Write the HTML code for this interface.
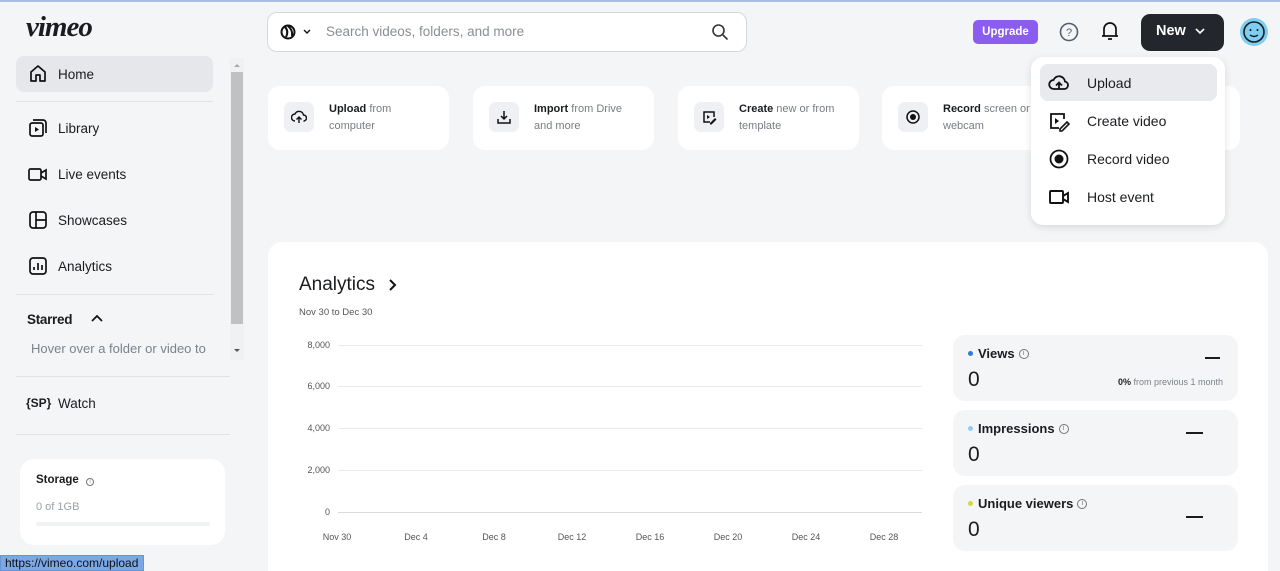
<!DOCTYPE html>
<html style="overflow:hidden;height:571px"><head><meta charset="utf-8"><style>
*{box-sizing:border-box;margin:0;padding:0}
body{width:1280px;height:571px;overflow:hidden;background:#f4f5f7;font-family:"Liberation Sans",sans-serif;color:#1a1c1f;position:relative}
.a{position:absolute}
.nav{position:absolute;left:16px;width:197px;height:36px;display:flex;align-items:center;font-size:13.5px;padding-left:12px}
.nav svg{margin-right:10px}
.hr{position:absolute;left:16px;height:1px;background:#e1e3e7}
.card{position:absolute;top:86px;height:64px;background:#fff;border-radius:12px;font-size:11px;color:#787c85;line-height:17px}
.card .ic{position:absolute;left:16px;top:16px;width:30px;height:30px;background:#eef0f3;border-radius:7px;display:flex;align-items:center;justify-content:center}
.card .t{position:absolute;left:61px;top:15px;width:104px}
.card b{color:#1a1c1f}
.stat{position:absolute;left:953px;width:285px;height:66px;background:#f4f5f7;border-radius:12px}
.stat .l{position:absolute;left:15px;top:11px;font-size:13px;font-weight:bold;display:flex;align-items:center}
.dot{width:5px;height:5px;border-radius:50%;margin-right:5px;display:inline-block}
.stat .v{position:absolute;left:15px;top:33px;font-size:21px}
.dash{position:absolute;width:17px;height:2px;background:#1a1c1f}
.yl{position:absolute;left:290px;width:40px;text-align:right;font-size:9px;color:#555}
.gl{position:absolute;left:338px;width:584px;height:1px;background:#e8eaed}
.xl{position:absolute;top:532px;font-size:9px;color:#555;width:40px;text-align:center}
.mi{position:absolute;left:1040px;width:177px;height:37px;display:flex;align-items:center;font-size:14px;padding-left:8px}
.mi span{position:absolute;left:47px}
.info{display:inline-block;width:10px;height:10px;border:1px solid #777;border-radius:50%;margin-left:4px;font-size:7px;text-align:center;line-height:8px;color:#777;font-weight:normal}
</style></head><body>
<div class="a" style="left:0;top:0;width:1280px;height:2px;background:#a9bfe0"></div>
<div class="a" style="left:26px;top:11px;font-family:'Liberation Serif',serif;font-style:italic;font-weight:bold;font-size:29px;letter-spacing:-1px">vimeo</div>
<div class="a" style="left:267px;top:12px;width:480px;height:40px;background:#fff;border:1px solid #d5d8dd;border-radius:10px"></div>
<svg class="a" style="left:280px;top:24px" width="34" height="16"><circle cx="8" cy="8" r="6.5" fill="none" stroke="#111" stroke-width="2"/><path d="M5 3 Q9 7 6 13 M8 2 Q13 6 12 12" stroke="#111" stroke-width="2" fill="none"/><path d="M24 6 l3 3 3-3" stroke="#111" stroke-width="1.4" fill="none"/></svg>
<div class="a" style="left:326px;top:24px;font-size:13.5px;color:#8a8e96">Search videos, folders, and more</div>
<svg class="a" style="left:711px;top:23px" width="18" height="18"><circle cx="7.5" cy="7.5" r="5.5" fill="none" stroke="#333" stroke-width="1.6"/><path d="M12 12l4.5 4.5" stroke="#333" stroke-width="1.6"/></svg>
<div class="a" style="left:973px;top:20px;width:65px;height:24px;background:#8b5cf0;border-radius:5px;color:#fff;font-size:11.5px;font-weight:bold;text-align:center;line-height:24px">Upgrade</div>
<svg class="a" style="left:1058px;top:21px" width="22" height="22"><circle cx="11" cy="11" r="8.5" fill="none" stroke="#55606e" stroke-width="1.6"/><text x="11" y="15" font-size="11" text-anchor="middle" fill="#55606e" font-family="Liberation Sans">?</text></svg>
<svg class="a" style="left:1100px;top:20px" width="20" height="22"><path d="M4 16 V9 a6 6 0 0 1 12 0 V16 Z M2 16 H18 M8 19 h4" stroke="#111" stroke-width="1.7" fill="none" stroke-linejoin="round"/></svg>
<div class="a" style="left:1141px;top:14px;width:83px;height:37px;background:#23272d;border-radius:9px;color:#fff;font-size:14.5px;font-weight:bold;line-height:35px;padding-left:15px">New</div>
<svg class="a" style="left:1194px;top:26px" width="12" height="10"><path d="M2 3l4 4 4-4" stroke="#fff" stroke-width="1.6" fill="none"/></svg>
<svg class="a" style="left:1239px;top:17px" width="30" height="30"><circle cx="15" cy="15" r="14" fill="#7fcdf1"/><circle cx="15" cy="15" r="10" fill="none" stroke="#1a1c1f" stroke-width="1.6"/><circle cx="11.5" cy="13" r="1" fill="#111"/><circle cx="18.5" cy="13" r="1" fill="#111"/><path d="M11 18 q4 3 8 0" stroke="#111" stroke-width="1.4" fill="none"/></svg>

<div class="nav" style="top:56px;background:#e5e7eb;border-radius:8px"><svg width="20" height="20"><path d="M3 17 V8 L10 2 L17 8 V17 H12 V11 H8 V17 Z" fill="none" stroke="#111" stroke-width="1.7" stroke-linejoin="round"/></svg>Home</div>
<div class="hr" style="top:101px;width:197px"></div>
<div class="nav" style="top:110px"><svg width="20" height="20"><rect x="2" y="5" width="13" height="13" rx="2" fill="none" stroke="#111" stroke-width="1.7"/><path d="M5 2h10a3 3 0 0 1 3 3v10" fill="none" stroke="#111" stroke-width="1.7"/><path d="M7 9l4 2.5-4 2.5z" fill="#111"/></svg>Library</div>
<div class="nav" style="top:156px"><svg width="20" height="20"><rect x="1" y="5" width="12" height="11" rx="1.5" fill="none" stroke="#111" stroke-width="1.7"/><path d="M13 9l5-3v9l-5-3" fill="none" stroke="#111" stroke-width="1.7"/></svg>Live events</div>
<div class="nav" style="top:202px"><svg width="20" height="20"><rect x="2" y="2" width="16" height="16" rx="3" fill="none" stroke="#111" stroke-width="1.7"/><path d="M8 2v16M8 10h10" stroke="#111" stroke-width="1.7"/></svg>Showcases</div>
<div class="nav" style="top:248px"><svg width="20" height="20"><rect x="2" y="2" width="16" height="16" rx="3" fill="none" stroke="#111" stroke-width="1.7"/><path d="M6 14v-3M10 14v-7M14 14v-5" stroke="#111" stroke-width="1.7"/></svg>Analytics</div>
<div class="hr" style="top:294px;width:198px"></div>
<div class="a" style="left:27px;top:312px;font-size:13.5px;font-weight:bold;letter-spacing:-0.3px">Starred</div>
<svg class="a" style="left:90px;top:314px" width="14" height="10"><path d="M2 7l5-5 5 5" stroke="#111" stroke-width="1.7" fill="none"/></svg>
<div class="a" style="left:31px;top:341px;font-size:13px;color:#7c818a">Hover over a folder or video to</div>
<div class="hr" style="top:376px;width:214px"></div>
<div class="a" style="left:26px;top:396px;font-size:12px;font-weight:bold">{SP}</div>
<div class="a" style="left:58px;top:396px;font-size:13.5px">Watch</div>
<div class="hr" style="top:434px;width:214px"></div>
<div class="a" style="left:20px;top:459px;width:205px;height:86px;background:#fff;border-radius:14px"></div>
<div class="a" style="left:36px;top:474px;font-size:11.5px;font-weight:bold">Storage <span class="info" style="width:8px;height:8px;line-height:6px;font-size:5px">i</span></div>
<div class="a" style="left:36px;top:501px;font-size:11px;color:#9aa0a8">0 of 1GB</div>
<div class="a" style="left:36px;top:522px;width:174px;height:4px;background:#f1f2f4;border-radius:2px"></div>
<div class="a" style="left:0;top:555px;width:144px;height:16px;background:#7aa7e8;border:1px solid #6a94d4;font-size:12px;line-height:15px;padding-left:4px;color:#111;z-index:5">https://vimeo.com/upload</div>
<div class="a" style="left:230px;top:58px;width:14px;height:302px;background:#f0f1f3"></div>
<div class="a" style="left:231px;top:72px;width:12px;height:252px;background:#c1c1c1"></div>
<div class="a" style="left:234px;top:61px;width:0;height:0;border:3px solid transparent;border-bottom-color:#aaa"></div>
<div class="a" style="left:234px;top:349px;width:0;height:0;border:3px solid transparent;border-top-color:#555"></div>

<div class="card" style="left:268px;width:181px"><div class="ic"><svg width="16" height="16"><path d="M4 12a3.5 3.5 0 0 1 0-7 4.5 4.5 0 0 1 8.5 1 3 3 0 0 1 0 6M8 14V8M5.5 10.5 8 8l2.5 2.5" fill="none" stroke="#111" stroke-width="1.4"/></svg></div><div class="t"><b>Upload</b> from computer</div></div>
<div class="card" style="left:473px;width:181px"><div class="ic"><svg width="16" height="16"><path d="M8 2v8M5 7l3 3 3-3M2 10v4h12v-4" fill="none" stroke="#111" stroke-width="1.5"/></svg></div><div class="t" style="width:96px"><b>Import</b> from Drive and more</div></div>
<div class="card" style="left:678px;width:181px"><div class="ic"><svg width="16" height="16"><path d="M9 13H3V3h10v5" fill="none" stroke="#111" stroke-width="1.5"/><path d="M6 6l3 2-3 2z M9 14l5-5 1.5 1.5-5 5H9z" fill="#111"/></svg></div><div class="t"><b>Create</b> new or from template</div></div>
<div class="card" style="left:882px;width:358px"><div class="ic"><svg width="16" height="16"><circle cx="8" cy="8" r="6" fill="none" stroke="#111" stroke-width="1.5"/><circle cx="8" cy="8" r="3" fill="#111"/></svg></div><div class="t"><b>Record</b> screen or webcam</div></div>

<div class="a" style="left:268px;top:242px;width:1000px;height:329px;background:#fff;border-radius:14px 14px 0 0"></div>
<div class="a" style="left:299px;top:274px;font-size:19px;font-weight:500">Analytics</div>
<svg class="a" style="left:387px;top:278px" width="12" height="14"><path d="M3 2l5 5-5 5" stroke="#111" stroke-width="2" fill="none"/></svg>
<div class="a" style="left:299px;top:307px;font-size:9.5px;color:#555">Nov 30 to Dec 30</div>
<div class="yl" style="top:340px">8,000</div><div class="gl" style="top:345px"></div>
<div class="yl" style="top:381px">6,000</div><div class="gl" style="top:386px"></div>
<div class="yl" style="top:423px">4,000</div><div class="gl" style="top:428px"></div>
<div class="yl" style="top:465px">2,000</div><div class="gl" style="top:470px"></div>
<div class="yl" style="top:507px">0</div><div class="gl" style="top:512px;background:#d8dadd"></div>
<div class="xl" style="left:317px">Nov 30</div><div class="xl" style="left:396px">Dec 4</div><div class="xl" style="left:474px">Dec 8</div><div class="xl" style="left:552px">Dec 12</div><div class="xl" style="left:630px">Dec 16</div><div class="xl" style="left:708px">Dec 20</div><div class="xl" style="left:786px">Dec 24</div><div class="xl" style="left:864px">Dec 28</div>

<div class="stat" style="top:335px"><div class="l"><span class="dot" style="background:#2f7ad6"></span>Views<span class="info">i</span></div><div class="v">0</div><div class="dash" style="left:252px;top:22px;width:15px"></div><div class="a" style="right:15px;top:42px;font-size:9px;color:#7c818a"><b style="color:#222">0%</b> from previous 1 month</div></div>
<div class="stat" style="top:410px"><div class="l"><span class="dot" style="background:#8fcdf5"></span>Impressions<span class="info">i</span></div><div class="v">0</div><div class="dash" style="left:233px;top:22px"></div></div>
<div class="stat" style="top:485px"><div class="l"><span class="dot" style="background:#d6d83a"></span>Unique viewers<span class="info">i</span></div><div class="v">0</div><div class="dash" style="left:233px;top:31px"></div></div>

<div class="a" style="left:1031px;top:57px;width:194px;height:168px;background:#fff;border-radius:12px;box-shadow:0 2px 8px rgba(0,0,0,.12)"></div>
<div class="mi" style="top:64px;background:#e9eaed;border-radius:8px"><svg width="22" height="22"><path d="M6 17a4.5 4.5 0 0 1-.5-9 6 6 0 0 1 11.5 1.5 3.8 3.8 0 0 1-.5 7.5z" fill="none" stroke="#111" stroke-width="1.8"/><path d="M11 17v-6M8 13.5 11 10.5l3 3" stroke="#111" stroke-width="1.8" fill="none"/></svg><span>Upload</span></div>
<div class="mi" style="top:102px"><svg width="22" height="22"><path d="M11 18H3V4h13v5" fill="none" stroke="#111" stroke-width="1.8"/><path d="M7 8l4 3-4 3z" fill="#111"/><path d="M12 19l7-7 2 2-7 7h-2z" fill="none" stroke="#111" stroke-width="1.6"/></svg><span>Create video</span></div>
<div class="mi" style="top:140px"><svg width="22" height="22"><circle cx="11" cy="11" r="8.5" fill="none" stroke="#111" stroke-width="1.8"/><circle cx="11" cy="11" r="4.5" fill="#111"/></svg><span>Record video</span></div>
<div class="mi" style="top:178px"><svg width="22" height="22"><rect x="2" y="5" width="13" height="12" rx="1" fill="none" stroke="#111" stroke-width="1.9"/><path d="M15 10l5-3v9l-5-3" fill="none" stroke="#111" stroke-width="1.9"/></svg><span>Host event</span></div>
</body></html>
